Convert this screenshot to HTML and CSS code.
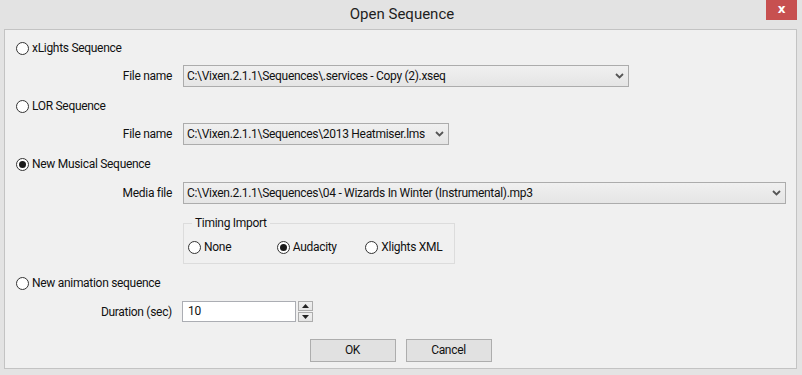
FILE: index.html
```html
<!DOCTYPE html>
<html>
<head>
<meta charset="utf-8">
<link rel="stylesheet" href="styles.css">
</head>
<body>
<div class="window">
  <div class="titlebar">
    <div></div>
    <div class="title">Open Sequence</div>
    <div class="tb-right"><div class="close">x</div></div>
  </div>
  <div class="client">
    <div class="opt top1"><span class="radio"></span><span>xLights Sequence</span></div>
    <div class="field f1">
      <span class="lbl">File name</span>
      <div class="combo w1"><span class="ctext">C:\Vixen.2.1.1\Sequences\.services - Copy (2).xseq</span><svg class="chev" width="9" height="6" viewBox="0 0 9 6"><polyline points="1,1 4.5,4.5 8,1" fill="none" stroke="#555" stroke-width="1.8"/></svg></div>
    </div>
    <div class="opt gapr"><span class="radio"></span><span>LOR Sequence</span></div>
    <div class="field f1">
      <span class="lbl">File name</span>
      <div class="combo w2"><span class="ctext">C:\Vixen.2.1.1\Sequences\2013 Heatmiser.lms</span><svg class="chev" width="9" height="6" viewBox="0 0 9 6"><polyline points="1,1 4.5,4.5 8,1" fill="none" stroke="#555" stroke-width="1.8"/></svg></div>
    </div>
    <div class="opt gapr"><span class="radio on"></span><span>New Musical Sequence</span></div>
    <div class="field f2">
      <span class="lbl">Media file</span>
      <div class="combo w3"><span class="ctext">C:\Vixen.2.1.1\Sequences\04 - Wizards In Winter (Instrumental).mp3</span><svg class="chev" width="9" height="6" viewBox="0 0 9 6"><polyline points="1,1 4.5,4.5 8,1" fill="none" stroke="#555" stroke-width="1.8"/></svg></div>
    </div>
    <div class="group">
      <div class="group-title">Timing Import</div>
      <div class="group-opts">
        <div class="gopt"><span class="radio"></span><span>None</span></div>
        <div class="gopt"><span class="radio on"></span><span>Audacity</span></div>
        <div class="gopt"><span class="radio"></span><span>Xlights XML</span></div>
      </div>
    </div>
    <div class="opt gapr"><span class="radio"></span><span>New animation sequence</span></div>
    <div class="field f3">
      <span class="lbl">Duration (sec)</span>
      <div class="spinrow">
        <div class="input">10</div>
        <div class="spin">
          <div class="sbtn"><svg width="7" height="4" viewBox="0 0 7 4"><polygon points="0,4 3.5,0 7,4" fill="#222"/></svg></div>
          <div class="sbtn"><svg width="7" height="4" viewBox="0 0 7 4"><polygon points="0,0 3.5,4 7,0" fill="#222"/></svg></div>
        </div>
      </div>
    </div>
    <div class="buttons">
      <div class="btn">OK</div>
      <div class="btn">Cancel</div>
    </div>
  </div>
</div>
</body>
</html>
```

FILE: styles.css
```css
html, body {
  margin: 0;
  padding: 0;
}
body {
  width: 802px;
  height: 375px;
  background: #e3e3e3;
  font-family: Roboto, "Liberation Sans", sans-serif;
  font-size: 12px;
  letter-spacing: -0.3px;
  color: #111;
  overflow: hidden;
}
.window {
  display: flex;
  flex-direction: column;
  height: 375px;
}
.titlebar {
  height: 29px;
  display: grid;
  grid-template-columns: 1fr auto 1fr;
  align-items: start;
}
.title {
  font-size: 15px;
  letter-spacing: 0;
  line-height: 29px;
  color: #1e1e1e;
  padding-left: 2px;
}
.tb-right {
  display: flex;
  justify-content: flex-end;
  padding-right: 5px;
}
.close {
  width: 31px;
  height: 20px;
  background: #c75050;
  color: #fff;
  font-family: "DejaVu Sans", sans-serif;
  font-weight: bold;
  font-size: 12px;
  letter-spacing: 0;
  line-height: 18px;
  text-align: center;
}
.client {
  margin: 0 5px 6px 4px;
  height: 338px;
  border: 1px solid #c3c3c3;
  background: #f0f0f0;
  display: flex;
  flex-direction: column;
}
.opt {
  display: flex;
  align-items: center;
  gap: 3px;
  height: 16px;
  margin-left: 11px;
  line-height: 16px;
}
.top1 { margin-top: 10px; }
.gapr { margin-top: 11px; }
.radio {
  width: 13px;
  height: 13px;
  box-sizing: border-box;
  border: 1px solid #333;
  border-radius: 50%;
  background: #fff;
  display: inline-flex;
  align-items: center;
  justify-content: center;
  flex: none;
}
.radio.on::after {
  content: "";
  width: 7px;
  height: 7px;
  border-radius: 50%;
  background: #1a1a1a;
}
.field {
  display: grid;
  grid-template-columns: 167px auto;
  column-gap: 11px;
  align-items: center;
  justify-content: start;
}
.f1 { margin-top: 9px; }
.f2 { margin-top: 10px; }
.f3 { margin-top: 10px; }
.lbl {
  text-align: right;
  white-space: nowrap;
}
.combo {
  height: 22px;
  box-sizing: border-box;
  border: 1px solid #acacac;
  background: linear-gradient(#f0f0f0, #e5e5e5);
  display: flex;
  align-items: center;
  justify-content: space-between;
  padding: 0 4px 0 3px;
}
.ctext {
  white-space: nowrap;
  overflow: hidden;
}
.w1 { width: 446px; }
.w2 { width: 266px; }
.w3 { width: 603px; }
.chev { flex: none; }
.group {
  margin-top: 19px;
  margin-left: 178px;
  width: 272px;
  box-sizing: border-box;
  border: 1px solid #dcdcdc;
  padding: 0 0 8px 4px;
}
.group-title {
  margin-top: -9px;
  margin-left: 4px;
  width: fit-content;
  padding: 0 3px 0 3px;
  background: #f0f0f0;
  line-height: 16px;
}
.group-opts {
  display: flex;
  margin-top: 8px;
}
.gopt {
  width: 89px;
  display: flex;
  align-items: center;
  gap: 3px;
  height: 16px;
}
.spinrow {
  display: flex;
  align-items: center;
  gap: 2px;
  margin-left: -1px;
}
.input {
  width: 114px;
  height: 21px;
  box-sizing: border-box;
  border: 1px solid #abadb3;
  background: #fff;
  padding-left: 5px;
  line-height: 19px;
}
.spin {
  display: flex;
  flex-direction: column;
  gap: 1px;
}
.sbtn {
  width: 15px;
  height: 10px;
  box-sizing: border-box;
  border: 1px solid #acacac;
  background: linear-gradient(#f0f0f0, #e5e5e5);
  display: flex;
  align-items: center;
  justify-content: center;
}
.buttons {
  display: flex;
  justify-content: center;
  gap: 10px;
  margin-top: 17px;
}
.btn {
  width: 86px;
  height: 23px;
  box-sizing: border-box;
  border: 1px solid #adadad;
  background: #e1e1e1;
  text-align: center;
  line-height: 21px;
}
```
